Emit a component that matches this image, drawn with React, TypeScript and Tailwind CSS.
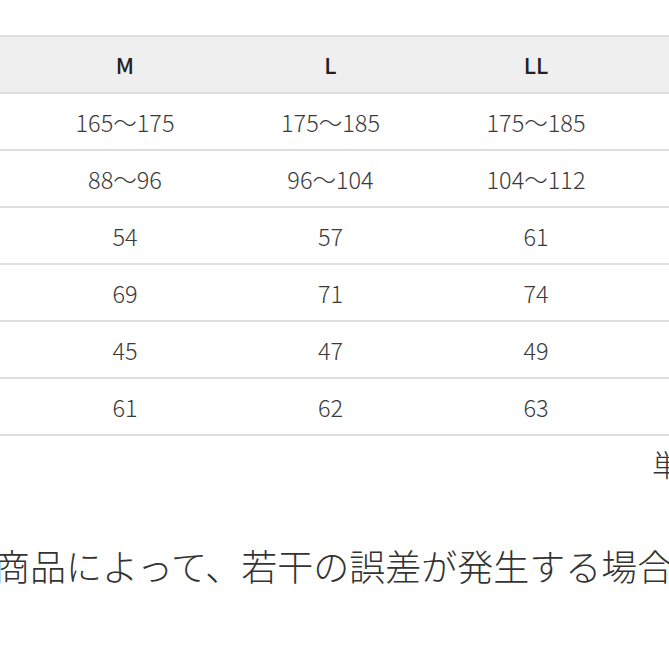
const HEAD = ['身長', 'M', 'L', 'LL', '3L'];

const ROWS: string[][] = [
  ['身長', '165〜175', '175〜185', '175〜185', '180〜190'],
  ['胸囲', '88〜96', '96〜104', '104〜112', '112〜120'],
  ['着丈', '54', '57', '61', '64'],
  ['身幅', '69', '71', '74', '77'],
  ['肩幅', '45', '47', '49', '51'],
  ['袖丈', '61', '62', '63', '64'],
];

const COLS = 'grid grid-cols-[205px_206px_205px_206px_206px]';

export default function App() {
  return (
    <div
      className="h-[669px] w-[669px] overflow-hidden bg-white text-[#333]"
      style={{ fontFamily: '"Noto Sans CJK JP", "Noto Sans", sans-serif' }}
    >
      <div className="pt-[35px]">
        <div className="ml-[-183px] w-[1028px]">
          <div className={`${COLS} h-[59px] border-y-2 border-[#dedede] bg-[#efefef] text-[22px] font-medium text-[#222]`}>
            {HEAD.map((h, i) => (
              <div key={i} className="flex items-center justify-center">
                {h}
              </div>
            ))}
          </div>
          {ROWS.map((r, ri) => (
            <div key={ri} className={`${COLS} h-[57px] border-b-2 border-[#dedede] text-[23.5px] font-light text-[#3a3a3a]`}>
              {r.map((c, ci) => (
                <div key={ci} className="flex items-center justify-center pt-[3px]">
                  {c}
                </div>
              ))}
            </div>
          ))}
        </div>

        <div className="mt-[10px] flex h-[34px] items-center whitespace-nowrap pl-[652px] text-[30px] font-light leading-none">
          単位：cm
        </div>

        <div className="mt-[67px] ml-[-6px] whitespace-nowrap text-[36px] font-light leading-none">
          商品によって、若干の誤差が発生する場合があります。
        </div>
      </div>
    </div>
  );
}
